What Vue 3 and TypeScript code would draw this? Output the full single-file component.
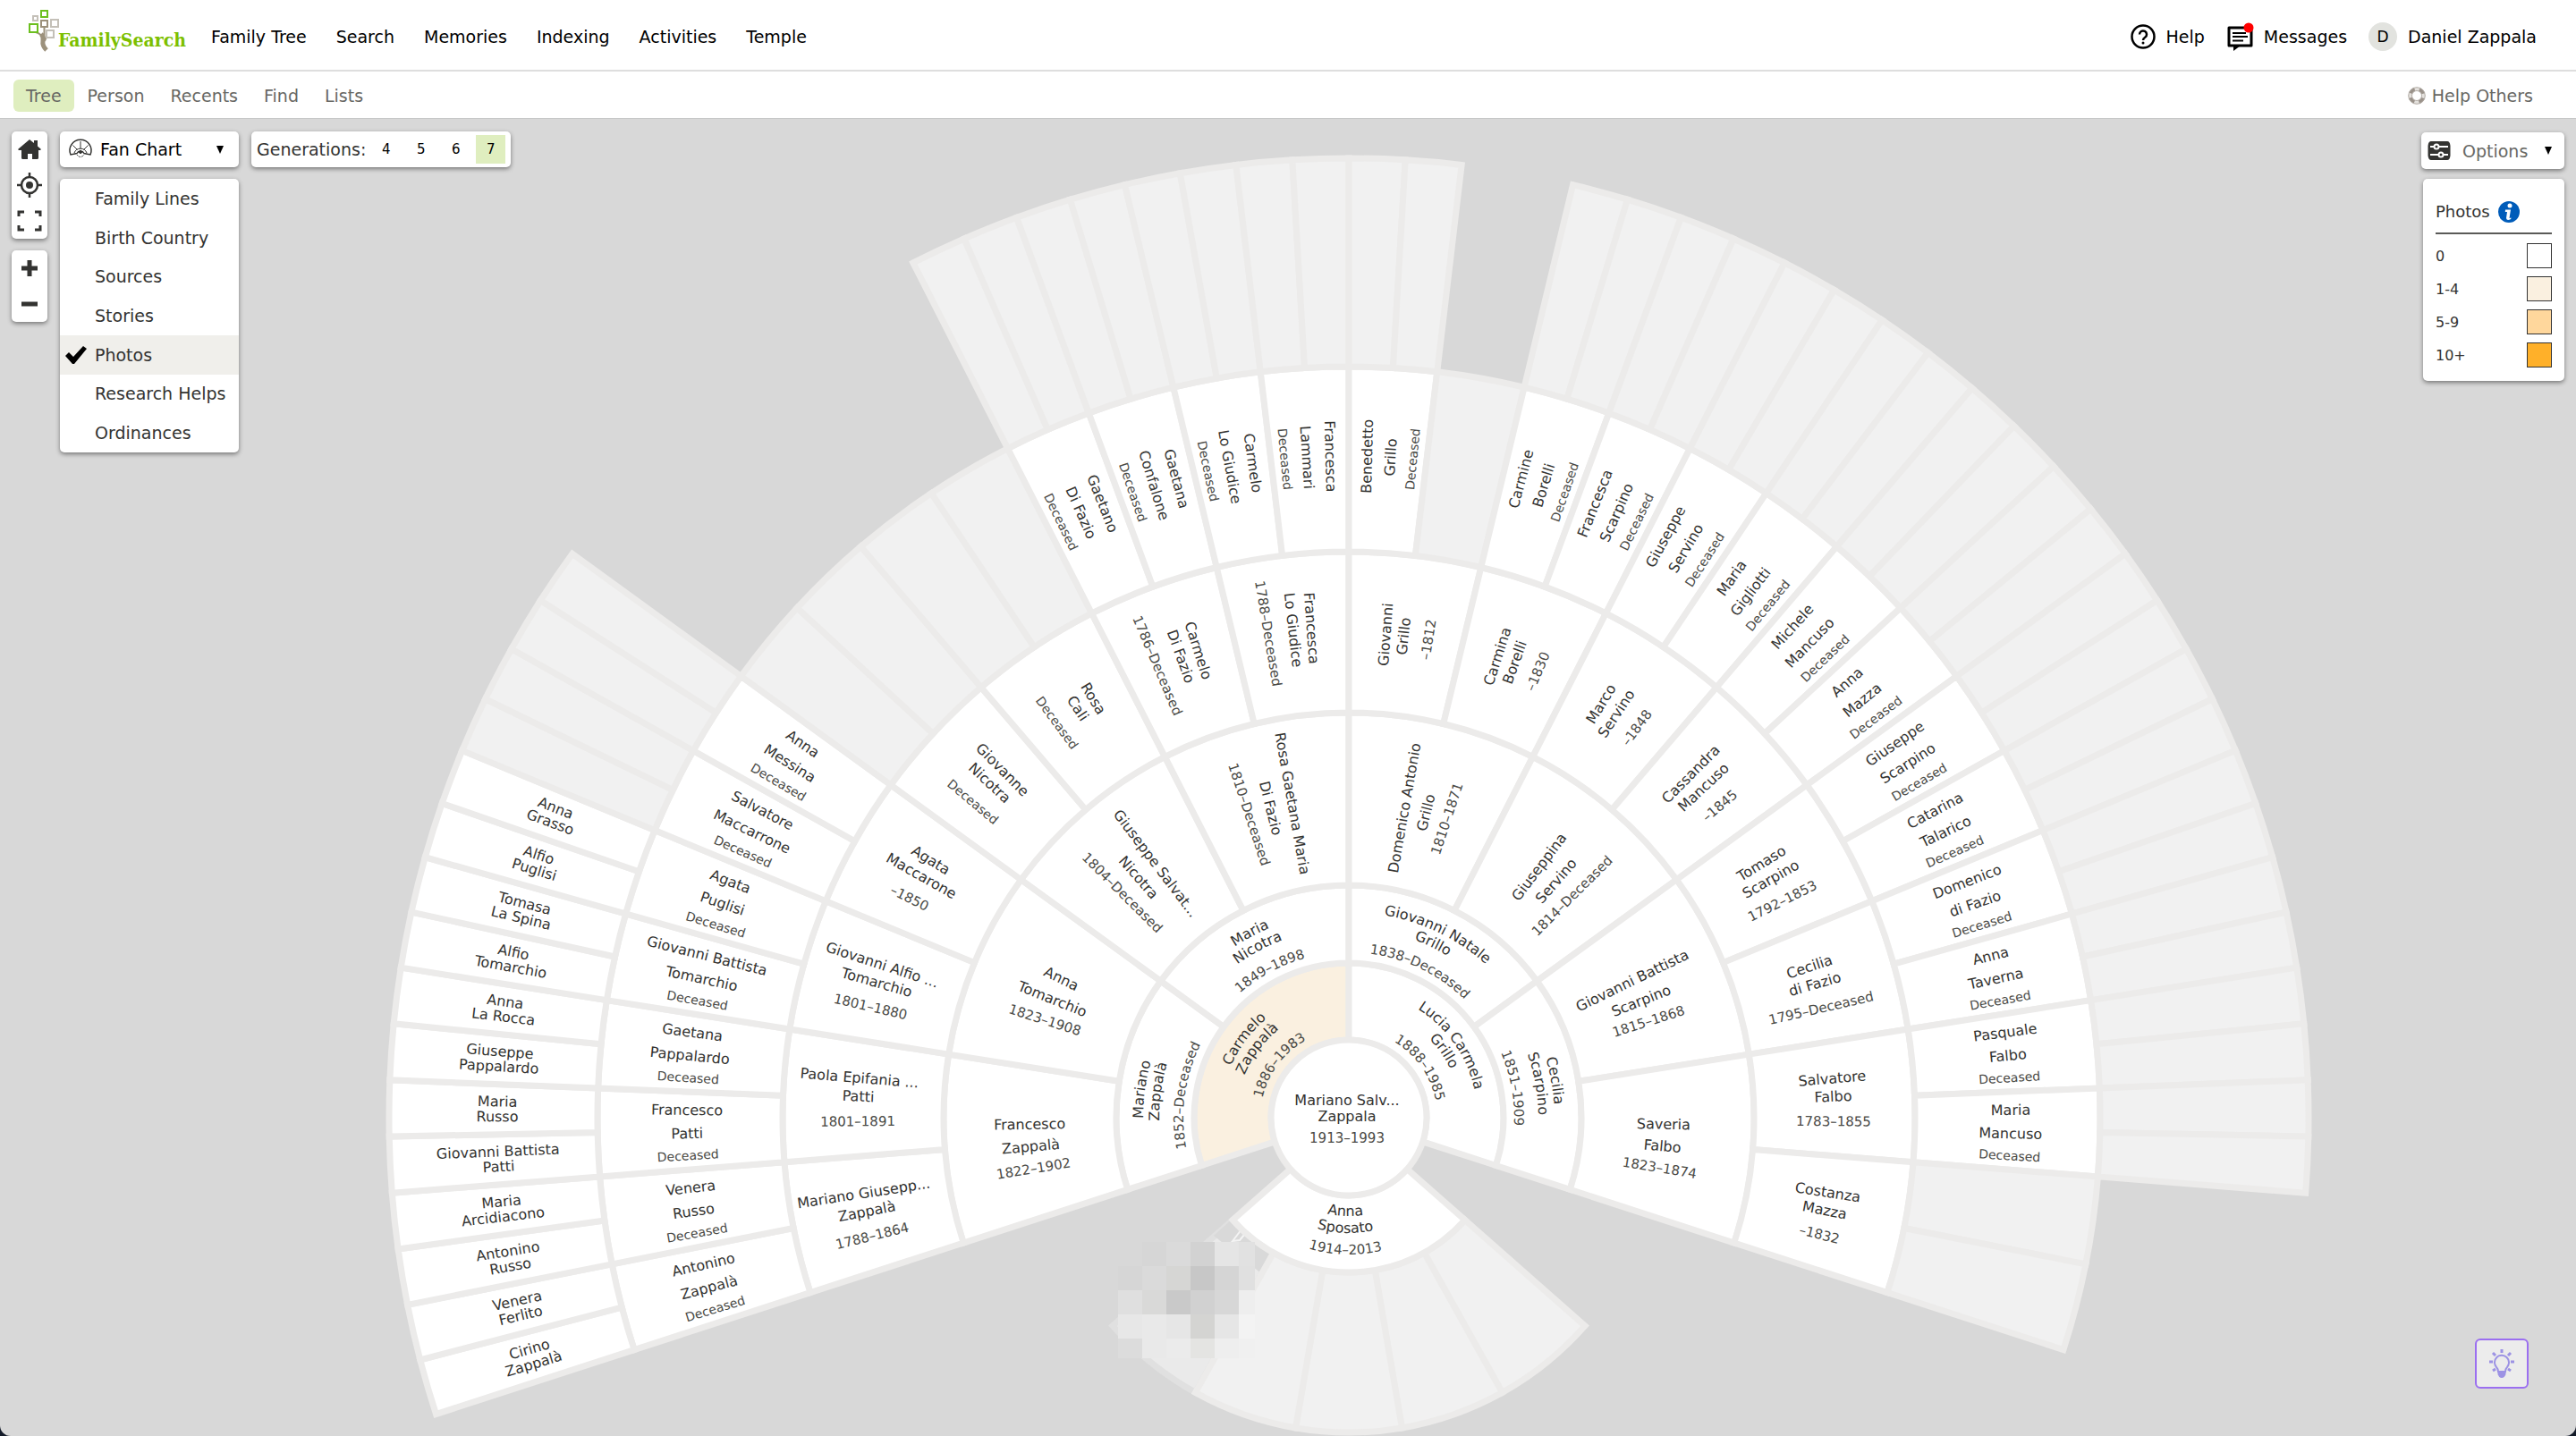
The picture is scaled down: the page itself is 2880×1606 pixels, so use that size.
<script setup lang="ts">
import { ref } from 'vue'

interface Cell { key: string; d: string; filled: string }
interface Line { key: string; text: string; transform: string; anchorX: number; cls: string; dy: number }
interface ArcLine { key: string; text: string; d: string; cls: string }

const mainLinks = ['Family Tree', 'Search', 'Memories', 'Indexing', 'Activities', 'Temple']
const subLinks = ['Tree', 'Person', 'Recents', 'Find', 'Lists']
const views = ['Family Lines', 'Birth Country', 'Sources', 'Stories', 'Photos', 'Research Helps', 'Ordinances']
const generations = [4, 5, 6, 7]
const legend = [
  { label: '0', color: '#ffffff' },
  { label: '1-4', color: '#faf0e0' },
  { label: '5-9', color: '#ffd79c' },
  { label: '10+', color: '#ffb029' },
]

const activeTab = ref('Tree')
const activeView = ref('Photos')
const activeGeneration = ref(7)

// Ring boundaries, measured outwards from the focus person.
const radii = [87, 173, 260, 453, 633, 840, 1073]
const SPREAD = 216

// One list per generation, from the far left of the fan to the far right.
// '' is a known gap in the tree, null is a place that is not drawn.
const none = (n: number): null[] => Array(n).fill(null)
const blank = (n: number): string[] => Array(n).fill('')
const rings: (string | null)[][] = [
  ['Carmelo|Zappalà|1886–1983', 'Lucia Carmela|Grillo|1888–1985'],
  ['Mariano|Zappalà|1852–Deceased', 'Maria|Nicotra|1849–1898', 'Giovanni Natale|Grillo|1838–Deceased', 'Cecilia|Scarpino|1851–1909'],
  [
    'Francesco|Zappalà|1822–1902', 'Anna|Tomarchio|1823–1908', 'Giuseppe Salvat...|Nicotra|1804–Deceased',
    'Rosa Gaetana Maria|Di Fazio|1810–Deceased', 'Domenico Antonio|Grillo|1810–1871', 'Giuseppina|Servino|1814–Deceased',
    'Giovanni Battista|Scarpino|1815–1868', 'Saveria|Falbo|1823–1874',
  ],
  [
    'Mariano Giusepp...|Zappalà|1788–1864', 'Paola Epifania ...|Patti|1801–1891', 'Giovanni Alfio ...|Tomarchio|1801–1880',
    'Agata|Maccarone|–1850', 'Giovanne|Nicotra|Deceased', 'Rosa|Cali|Deceased', 'Carmelo|Di Fazio|1786–Deceased',
    'Francesca|Lo Giudice|1788–Deceased', 'Giovanni|Grillo|–1812', 'Carmina|Borelli|–1830', 'Marco|Servino|–1848',
    'Cassandra|Mancuso|–1845', 'Tomaso|Scarpino|1792–1853', 'Cecilia|di Fazio|1795–Deceased', 'Salvatore|Falbo|1783–1855',
    'Costanza|Mazza|–1832',
  ],
  [
    'Antonino|Zappalà|Deceased', 'Venera|Russo|Deceased', 'Francesco|Patti|Deceased', 'Gaetana|Pappalardo|Deceased',
    'Giovanni Battista|Tomarchio|Deceased', 'Agata|Puglisi|Deceased', 'Salvatore|Maccarrone|Deceased', 'Anna|Messina|Deceased',
    ...blank(4),
    'Gaetano|Di Fazio|Deceased', 'Gaetana|Confalone|Deceased', 'Carmelo|Lo Giudice|Deceased', 'Francesca|Lammari|Deceased',
    'Benedetto|Grillo|Deceased', '', 'Carmine|Borelli|Deceased', 'Francesca|Scarpino|Deceased', 'Giuseppe|Servino|Deceased',
    'Maria|Gigliotti|Deceased', 'Michele|Mancuso|Deceased', 'Anna|Mazza|Deceased', 'Giuseppe|Scarpino|Deceased',
    'Catarina|Talarico|Deceased', 'Domenico|di Fazio|Deceased', 'Anna|Taverna|Deceased', 'Pasquale|Falbo|Deceased',
    'Maria|Mancuso|Deceased', '', '',
  ],
  [
    'Cirino|Zappalà', 'Venera|Ferlito', 'Antonino|Russo', 'Maria|Arcidiacono', 'Giovanni Battista|Patti', 'Maria|Russo',
    'Giuseppe|Pappalardo', 'Anna|La Rocca', 'Alfio|Tomarchio', 'Tomasa|La Spina', 'Alfio|Puglisi', 'Anna|Grasso',
    ...blank(4), ...none(8), ...blank(10), ...none(2), ...blank(24), ...none(4),
  ],
]

// Angle of each text line away from the middle of its cell, per generation.
const lineAngles: Record<number, number[]> = {
  2: [-3.4, 0.6, 4.7],
  3: [-2.45, -0.3, 2.7],
  4: [-1.83, 0.2, 2.15],
  5: [-0.56, 0.46],
}
const textRadii: Record<number, [number, number]> = {
  2: [357, 352],
  3: [549, 542],
  4: [740, 740],
  5: [952, 952],
}

const rad = (deg: number) => (deg * Math.PI) / 180
// Angles run clockwise from straight up.
const point = (r: number, deg: number) =>
  `${(r * Math.sin(rad(deg))).toFixed(2)} ${(-r * Math.cos(rad(deg))).toFixed(2)}`
const sector = (r0: number, r1: number, a0: number, a1: number) =>
  `M${point(r0, a0)}L${point(r1, a0)}A${r1} ${r1} 0 0 1 ${point(r1, a1)}L${point(r0, a1)}A${r0} ${r0} 0 0 0 ${point(r0, a0)}Z`

const lineClass = (i: number, text: string) =>
  i < 2 ? 'name' : text === 'Deceased' ? 'status' : 'years'

const cells: Cell[] = []
const lines: Line[] = []
const arcLines: ArcLine[] = []

rings.forEach((ring, g) => {
  const step = SPREAD / ring.length
  ring.forEach((entry, i) => {
    if (entry === null) return
    const a0 = i * step - SPREAD / 2
    const mid = a0 + step / 2
    cells.push({
      key: `${g}-${i}`,
      d: sector(radii[g], radii[g + 1], a0, a0 + step),
      filled: entry === '' ? 'empty' : g === 0 && i === 0 ? 'few' : 'person',
    })
    if (entry === '') return
    entry.split('|').forEach((text, n) => {
      const key = `t${g}-${i}-${n}`
      const cls = lineClass(n, text)
      if (g < 2) {
        const r = radii[g] + [57, 39, 12][n]
        const centre = mid + g * -1.2 + (1 - g)
        arcLines.push({ key, text, cls, d: `M${point(r, centre - 50)}A${r} ${r} 0 0 1 ${point(r, centre + 50)}` })
        return
      }
      const left = mid < 0
      const delta = lineAngles[g][n]
      const angle = left ? mid - delta : mid + delta
      lines.push({
        key,
        text,
        cls,
        transform: `rotate(${(left ? angle + 90 : angle - 90).toFixed(2)})`,
        anchorX: left ? -textRadii[g][0] : textRadii[g][1],
        dy: n < 2 ? 6 : 5,
      })
    })
  })
})

// The spouse and the children sit under the focus person.
const CHILD = 97.2
const childCells = [0, 1, 2, 3].map((i) =>
  sector(173, 352, 180 - CHILD / 2 + (i * CHILD) / 5, 180 - CHILD / 2 + ((i + 1) * CHILD) / 5),
)
const hiddenChild = sector(173, 352, 180 + CHILD / 2 - CHILD / 5, 180 + CHILD / 2)
const spouseCell = sector(87, 173, 180 - CHILD / 2, 180 + CHILD / 2)
const spouse = [
  { text: 'Anna', r: 110, cls: 'name' },
  { text: 'Sposato', r: 129, cls: 'name' },
  { text: '1914–2013', r: 153, cls: 'years' },
].map((l) => {
  const centre = 180 + ((4 / l.r) * 180) / Math.PI
  return { ...l, d: `M${point(l.r, centre + 45)}A${l.r} ${l.r} 0 0 0 ${point(l.r, centre - 45)}` }
})

// Private details of a living person are covered by blocks.
const coverRows = [
  ['', '#d6d6d6', '#dadada', '#d2d2d2', '#e5e5e5', '#e1e1e1'],
  ['#d6d6d6', '#dadada', '#d6d6d4', '#c7c7c7', '#d5d5d5', '#e0e0e0'],
  ['#dfdfdf', '#d9d9d8', '#c9c9c9', '#d1d1d1', '#d7d7d7', '#eeeeee'],
  ['#e7e7e7', '#e9e9e9', '#e6e6e6', '#d4d4d2', '#e6e6e6', '#f3f3f3'],
  ['#dcdcdc', '#e9e9e9', '#ebebeb', '#e4e4e2', '#eeeeee', '#f0f0f0'],
]
const cover = coverRows.flatMap((row, y) =>
  row.map((color, x) => ({ color, x: -258 + x * 27, y: 139 + y * 27, w: x === 5 ? 18 : 27, h: y === 4 ? 22 : 27 })),
).filter((c) => c.color)
</script>

<template>
  <div class="app">
    <header class="topbar">
      <a href="#" class="logo" aria-label="FamilySearch">
        <svg width="36" height="46" viewBox="0 0 36 46" fill="none" aria-hidden="true">
          <path d="M17.500 19V34M8 25q6 2 9 7M24 28q-5 2-6 7" stroke="#9c917c" stroke-width="2" />
          <path d="M14 27q3 3 2 8t4 10" stroke="#9c917c" stroke-width="5" />
          <g stroke-width="2" fill="#fff">
            <rect x="14" y="1" width="7" height="7" stroke="#6cbf1f" />
            <rect x="5" y="7" width="5" height="5" stroke="#c4c0b8" />
            <rect x="14" y="12" width="7" height="7" stroke="#9c917c" />
            <rect x="25" y="11" width="8" height="8" stroke="#c4c0b8" />
            <rect x="1" y="16" width="9" height="9" stroke="#6cbf1f" />
            <rect x="20" y="23" width="8" height="8" stroke="#c4c0b8" />
          </g>
        </svg>
        <span class="wordmark">FamilySearch</span>
      </a>
      <nav class="main-nav" aria-label="Main">
        <a v-for="link in mainLinks" :key="link" href="#">{{ link }}</a>
      </nav>
      <div class="account">
        <a href="#" class="help">
          <svg width="28" height="28" viewBox="0 0 28 28" fill="none" stroke="#000" aria-hidden="true">
            <circle cx="14" cy="14" r="12.500" stroke-width="2.500" />
            <path d="M10 11.500a4 4 0 1 1 6.200 3.300c-1.500 1-2.200 1.500-2.200 3.200" stroke-width="2.500" />
            <circle cx="14" cy="21" r="1.500" fill="#000" stroke="none" />
          </svg>
          Help
        </a>
        <a href="#" class="messages">
          <svg width="30" height="32" viewBox="0 0 30 32" fill="none" stroke="#000" aria-hidden="true">
            <path d="M3 6h25v20H3z" stroke-width="3" stroke-linejoin="round" />
            <path d="M8 26h8l-8 6z" fill="#000" stroke="none" />
            <path d="M7 12h15M7 16h17M7 20.500h12" stroke-width="2" />
            <circle cx="25" cy="6" r="5.500" fill="#f00" stroke="none" />
          </svg>
          Messages
        </a>
        <a href="#" class="user"><span class="avatar">D</span>Daniel Zappala</a>
      </div>
    </header>

    <div class="subbar">
      <nav class="sub-nav" aria-label="Family tree">
        <a v-for="link in subLinks" :key="link" href="#" :class="{ active: link === activeTab }" @click.prevent="activeTab = link">{{ link }}</a>
      </nav>
      <a href="#" class="help-others">
        <svg width="20" height="20" viewBox="0 0 20 20" fill="none" aria-hidden="true">
          <circle cx="10" cy="10" r="7.500" stroke="#e4e1dd" stroke-width="4" />
          <circle cx="10" cy="10" r="7.500" stroke="#9a928a" stroke-width="4" stroke-dasharray="6.500 5.280" stroke-dashoffset="9.100" />
          <circle cx="10" cy="10" r="9.300" stroke="#b5afa9" />
          <circle cx="10" cy="10" r="5.500" stroke="#b5afa9" />
        </svg>
        Help Others
      </a>
    </div>

    <main class="stage">
      <svg class="fan" viewBox="-1508 -1117 2880 1473" role="img" aria-label="Fan chart">
        <path :d="hiddenChild" class="hidden-child" />
        <path d="M-130 113L-85 150L-98 174L-151 132Z" fill="#d9d9d9" />
        <path d="M-130 138l10-13 3 6-5 6zM-116 132q8-3 10 7" fill="none" stroke="#f4f4f4" stroke-width="2" />
        <path v-for="d in childCells" :key="d" :d="d" class="cell empty" />
        <path v-for="c in cells" :key="c.key" :d="c.d" class="cell" :class="c.filled" />
        <path :d="spouseCell" class="cell person" />
        <circle r="87" class="cell person" />
        <rect v-for="(c, i) in cover" :key="i" :x="c.x" :y="c.y" :width="c.w" :height="c.h" :fill="c.color" shape-rendering="crispEdges" />

        <text v-for="l in lines" :key="l.key" :class="l.cls" :x="l.anchorX" :y="l.dy" :transform="l.transform">{{ l.text }}</text>

        <template v-for="a in arcLines" :key="a.key">
          <path :id="a.key" :d="a.d" fill="none" />
          <text :class="a.cls"><textPath :href="'#' + a.key" startOffset="50%">{{ a.text }}</textPath></text>
        </template>
        <template v-for="(s, i) in spouse" :key="s.text">
          <path :id="'spouse' + i" :d="s.d" fill="none" />
          <text :class="s.cls"><textPath :href="'#spouse' + i" startOffset="50%">{{ s.text }}</textPath></text>
        </template>

        <text class="name" x="-2" y="-14">Mariano Salv...</text>
        <text class="name" x="-2" y="4">Zappala</text>
        <text class="years" x="-2" y="28">1913–1993</text>
      </svg>

      <div class="left-tools">
        <div class="tool-column">
          <div class="panel stack">
            <button type="button" aria-label="Home">
              <svg width="26" height="22" viewBox="0 0 26 22" fill="#333331" aria-hidden="true">
                <path d="M13 0l5 4V1h4v6.500l4 3.500-1 1h-2v8.500q0 1.500-1.500 1.500H16v-6h-5v6H5.500Q4 22 4 20.500V12H1l-1-1z" />
              </svg>
            </button>
            <button type="button" aria-label="Recenter">
              <svg width="28" height="28" viewBox="0 0 28 28" fill="none" stroke="#333331" aria-hidden="true">
                <circle cx="14" cy="14" r="9" stroke-width="2.500" />
                <circle cx="14" cy="14" r="4" fill="#333331" stroke="none" />
                <path d="M14 0v6M14 22v6M0 14h6M22 14h6" stroke-width="2.500" />
              </svg>
            </button>
            <button type="button" aria-label="Full screen">
              <svg width="28" height="24" viewBox="0 0 28 24" fill="none" stroke="#333331" stroke-width="3" aria-hidden="true">
                <path d="M2 7V2h6M20 2h6v5M26 17v5h-6M8 22H2v-5" />
              </svg>
            </button>
          </div>
          <div class="panel stack">
            <button type="button" aria-label="Zoom in">
              <svg width="20" height="20" viewBox="0 0 20 20" stroke="#333331" stroke-width="5" stroke-linejoin="round" aria-hidden="true"><path d="M10 1v18M1 10h18" /></svg>
            </button>
            <button type="button" aria-label="Zoom out">
              <svg width="20" height="20" viewBox="0 0 20 20" stroke="#333331" stroke-width="5" aria-hidden="true"><path d="M1 10h18" /></svg>
            </button>
          </div>
        </div>

        <div class="view-column">
          <button type="button" class="panel picker" aria-haspopup="menu" aria-expanded="true">
            <svg width="26" height="20" viewBox="0 0 26 20" fill="none" stroke="#333331" aria-hidden="true">
              <path d="M2 16A12 12 0 1 1 24 16L17 14.500A4.500 4.500 0 0 0 9 14.500Z" stroke-width="1.500" />
              <path d="M6 14A7.500 7.500 0 0 1 20 14M13 1v8M4.500 5.500l5 5M21.500 5.500l-5 5" />
              <circle cx="13" cy="13" r="1.500" fill="#333331" />
              <path d="M9 16q4 5 8 0" stroke-dasharray="2 1" />
            </svg>
            <span>Fan Chart</span>
            <i class="caret"></i>
          </button>
          <div class="panel menu" role="menu">
            <button v-for="view in views" :key="view" type="button" role="menuitemradio" :aria-checked="view === activeView" :class="{ chosen: view === activeView }" @click="activeView = view">
              <span class="tick">
                <svg v-if="view === activeView" width="24" height="20" viewBox="0 0 24 20" aria-hidden="true"><path d="M0 11l4-4 5 5L20 0l4 3L10 20H8z" fill="#000" /></svg>
              </span>
              {{ view }}
            </button>
          </div>
        </div>

        <div class="panel generations">
          <span>Generations:</span>
          <button v-for="n in generations" :key="n" type="button" :class="{ chosen: n === activeGeneration }" @click="activeGeneration = n">{{ n }}</button>
        </div>
      </div>

      <div class="right-tools">
        <button type="button" class="panel options">
          <svg width="26" height="21" viewBox="0 0 26 21" aria-hidden="true">
            <path d="M4 0h18q3 0 3.500 5v11q-.5 5-3.500 5H4q-3 0-3.500-5V5Q1 0 4 0z" fill="#333331" />
            <g fill="#333331" stroke="#fff" stroke-width="2">
              <path d="M3 6h20M3 15h20" />
              <circle cx="10" cy="6" r="2.500" />
              <circle cx="15" cy="15" r="2.500" />
            </g>
          </svg>
          <span>Options</span>
          <i class="caret"></i>
        </button>
        <section class="panel legend">
          <h2>
            Photos
            <svg width="24" height="24" viewBox="0 0 24 24" aria-hidden="true">
              <circle cx="12" cy="12" r="12" fill="#005cb9" />
              <circle cx="13" cy="5" r="2.500" fill="#fff" />
              <path d="M8 9.500h6L12.500 19l2-.5-.3 1.500q-4.700 2.500-5.200-1L10 12H7.800z" fill="#fff" />
            </svg>
          </h2>
          <ul>
            <li v-for="row in legend" :key="row.label"><span>{{ row.label }}</span><i :style="{ background: row.color }"></i></li>
          </ul>
        </section>
      </div>

      <button type="button" class="tips" aria-label="Tips">
        <svg width="28" height="32" viewBox="0 0 28 32" fill="none" stroke="#9c92e4" aria-hidden="true">
          <path d="M10 25q0-3-2-5a8 8 0 1 1 12 0q-2 2-2 5z" stroke-width="2" />
          <path d="M9.500 24h9v4q-1.500 4-4.500 4t-4.500-4z" fill="#9c92e4" stroke="none" />
          <path d="M14 0v4M0 14h4M24 14h4M4 4l3 3M24 4l-3 3M4 24l3-2M24 24l-3-2" stroke-width="3" />
        </svg>
      </button>
    </main>
  </div>
</template>

<style>
html {
  background: #141b29;
}
body {
  margin: 0;
}
</style>

<style scoped>
.app {
  display: flex;
  flex-direction: column;
  min-height: 100vh;
  overflow: hidden;
  border-radius: 0 0 12px 12px;
  background: #d8d8d8;
  color: #333331;
  font-family: "DejaVu Sans", Verdana, sans-serif;
  font-size: 19px;
  line-height: 24px;
}
a {
  color: inherit;
  text-decoration: none;
}
button {
  margin: 0;
  padding: 0;
  border: 0;
  background: none;
  color: inherit;
  font: inherit;
  cursor: pointer;
}
svg {
  display: block;
  flex: none;
  overflow: visible;
}

.topbar {
  display: flex;
  align-items: center;
  box-sizing: border-box;
  height: 80px;
  padding: 4px 44px 0 32px;
  border-bottom: 2px solid #dedede;
  background: #fff;
  color: #000;
}
.logo {
  display: flex;
  align-items: flex-end;
  height: 46px;
  margin-bottom: 14px;
}
.logo .wordmark {
  margin-left: -3px;
  color: #7cbf00;
  font-family: "DejaVu Serif Condensed", "DejaVu Serif", serif;
  font-size: 21px;
  font-weight: 700;
  line-height: 24px;
}
.main-nav {
  display: flex;
  gap: 33px;
  margin-left: 28px;
}
.account {
  display: flex;
  align-items: center;
  gap: 24px;
  margin-left: auto;
}
.account a {
  display: flex;
  align-items: center;
}
.account .help,
.account .messages {
  gap: 12px;
}
.avatar {
  display: grid;
  place-items: center;
  width: 32px;
  height: 32px;
  margin-right: 12px;
  border-radius: 50%;
  background: #e2e3df;
  font-size: 17px;
}

.subbar {
  display: flex;
  align-items: center;
  justify-content: space-between;
  box-sizing: border-box;
  height: 53px;
  padding: 2px 48px 0 15px;
  border-bottom: 1px solid #c6c8c8;
  background: #fff;
  color: #686864;
}
.sub-nav {
  display: flex;
  gap: 1px;
}
.sub-nav a {
  padding: 6px 14px;
  border-radius: 6px;
}
.sub-nav .active {
  background: #dfeebf;
}
.help-others {
  display: flex;
  align-items: center;
  gap: 7px;
}

.stage {
  position: relative;
  flex: 1;
}
.fan {
  width: 100%;
  height: auto;
}
.cell {
  stroke: #ecebea;
  stroke-width: 7px;
}
.person {
  fill: #fff;
}
.empty {
  fill: #f1f1f1;
}
.few {
  fill: #faf0e0;
}
.hidden-child {
  fill: #eaeaea;
  stroke: #e0e0e0;
  stroke-width: 7px;
}
.fan text {
  fill: #333331;
  font-size: 16px;
  text-anchor: middle;
}
.fan .years {
  fill: #4a4a46;
  font-size: 15px;
}
.fan .status {
  fill: #4a4a46;
  font-size: 14px;
}

.panel {
  border-radius: 5px;
  background: #fff;
  box-shadow: 0 2px 5px rgba(0, 0, 0, 0.45);
}
.left-tools {
  position: absolute;
  top: 14px;
  left: 13px;
  display: flex;
  align-items: flex-start;
  gap: 14px;
}
.tool-column,
.view-column {
  display: flex;
  flex-direction: column;
  gap: 13px;
}
.stack button {
  display: grid;
  place-items: center;
  width: 40px;
  height: 40px;
}
.picker {
  display: flex;
  align-items: center;
  box-sizing: border-box;
  width: 200px;
  height: 40px;
  padding: 0 17px 0 10px;
  color: #000;
}
.picker span {
  margin-left: 9px;
}
.caret {
  margin-left: auto;
  border: 4px solid transparent;
  border-top: 9px solid #000;
  border-bottom: 0;
}
.menu {
  display: grid;
  grid-auto-rows: 1fr;
  height: 306px;
}
.menu button {
  display: flex;
  align-items: center;
  text-align: left;
}
.menu .chosen {
  background: #f0efeb;
}
.tick {
  width: 33px;
  padding-left: 6px;
}
.generations {
  display: flex;
  align-items: center;
  box-sizing: border-box;
  height: 40px;
  padding: 0 6px;
}
.generations button {
  width: 33px;
  height: 32px;
  margin-left: 6px;
  color: #000;
  font-size: 15px;
}
.generations .chosen {
  background: #dfeebf;
}

.right-tools {
  position: absolute;
  top: 15px;
  right: 13px;
  display: flex;
  flex-direction: column;
  align-items: flex-end;
  gap: 11px;
}
.options {
  display: flex;
  align-items: center;
  box-sizing: border-box;
  width: 160px;
  height: 41px;
  padding: 0 14px 0 7px;
}
.options span {
  margin-left: 13px;
  color: #686864;
}
.legend {
  box-sizing: border-box;
  width: 158px;
  padding: 25px 14px 15px;
}
.legend h2 {
  display: flex;
  align-items: center;
  gap: 9px;
  margin: 0;
  padding-bottom: 11px;
  border-bottom: 2px solid #5a5a58;
  font-size: 18px;
  font-weight: 400;
}
.legend ul {
  display: flex;
  flex-direction: column;
  gap: 9px;
  margin: 0;
  padding: 10px 0 0;
  font-size: 16px;
  list-style: none;
}
.legend li {
  display: flex;
  align-items: center;
  justify-content: space-between;
}
.legend li span {
  padding-top: 2px;
}
.legend i {
  box-sizing: border-box;
  width: 28px;
  height: 28px;
  border: 1px solid #333;
}
.tips {
  position: absolute;
  right: 53px;
  bottom: 53px;
  display: grid;
  place-items: center;
  box-sizing: border-box;
  width: 60px;
  height: 56px;
  border: 2px solid #9b6ff0;
  border-radius: 6px;
  background: #ececec;
}
</style>
